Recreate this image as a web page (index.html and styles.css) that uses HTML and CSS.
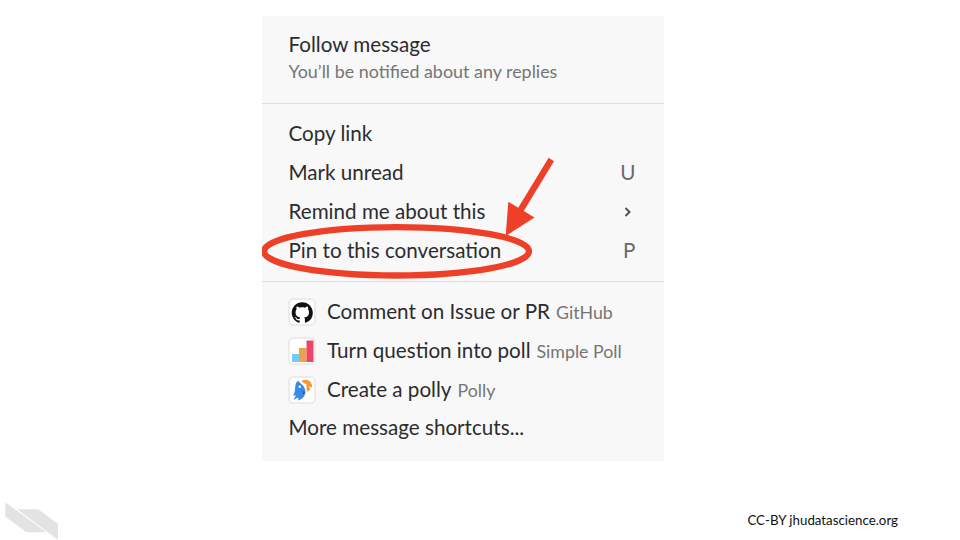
FILE: index.html
```
<!DOCTYPE html>
<html lang="en">
<head>
<meta charset="utf-8">
<title>Pin to this conversation</title>
<link rel="stylesheet" href="styles.css">
</head>
<body>
<main class="slide">
  <div class="menu">
    <section class="follow">
      <div class="label">Follow message</div>
      <div class="hint">You’ll be notified about any replies</div>
    </section>
    <section class="actions">
      <div class="row"><span class="label">Copy link</span></div>
      <div class="row"><span class="label">Mark unread</span><span class="key">U</span></div>
      <div class="row"><span class="label">Remind me about this</span>
        <svg class="chevron" viewBox="0 0 8 12"><path d="M1.5 2 5.5 6 1.5 10"/></svg>
      </div>
      <div class="row"><span class="label">Pin to this conversation</span><span class="key">P</span></div>
    </section>
    <section class="shortcuts">
      <div class="row app">
        <svg class="icon" viewBox="0 0 28 28"><rect class="tile" x="1" y="1" width="26" height="26" rx="4.5"/><path transform="translate(3.7 4.2) scale(1.32)" fill="#111" d="M8 0C3.58 0 0 3.58 0 8c0 3.54 2.29 6.53 5.47 7.59.4.07.55-.17.55-.38 0-.19-.01-.82-.01-1.49-2.01.37-2.53-.49-2.69-.94-.09-.23-.48-.94-.82-1.13-.28-.15-.68-.52-.01-.53.63-.01 1.08.58 1.23.82.72 1.21 1.87.87 2.33.66.07-.52.28-.87.51-1.07-1.78-.2-3.64-.89-3.64-3.95 0-.87.31-1.59.82-2.15-.08-.2-.36-1.02.08-2.12 0 0 .67-.21 2.2.82.64-.18 1.32-.27 2-.27s1.36.09 2 .27c1.53-1.04 2.2-.82 2.2-.82.44 1.1.16 1.92.08 2.12.51.56.82 1.27.82 2.15 0 3.07-1.87 3.75-3.65 3.95.29.25.54.73.54 1.48 0 1.07-.01 1.93-.01 2.2 0 .21.15.46.55.38A8.01 8.01 0 0 0 16 8c0-4.42-3.58-8-8-8z"/></svg>
        <span class="label">Comment on Issue or PR</span><span class="source">GitHub</span>
      </div>
      <div class="row app">
        <svg class="icon" viewBox="0 0 28 28"><rect class="tile" x="1" y="1" width="26" height="26" rx="4.5"/><path fill="#72cdf4" d="M4 17h7v8H4z"/><path fill="#eca04a" d="M11 11h7.5v14H11z"/><path fill="#e8476b" d="M18.5 3.5h7V25h-7z"/></svg>
        <span class="label">Turn question into poll</span><span class="source">Simple Poll</span>
      </div>
      <div class="row app">
        <svg class="icon" viewBox="0 0 28 28"><rect class="tile" x="1" y="1" width="26" height="26" rx="4.5"/><path fill="#378ae8" d="M10 4.800 12.300 7 15 9.500C17 12 17.700 14 17.200 17.500 16.500 21 13.500 23.500 10 24.500L10.500 21.500 5.300 23.800 8 19.500H5C7.500 16 6.800 13 7.300 10.500 7.600 8 8.300 6 10 4.800z"/><path fill="#f79a35" d="M13.500 5C17.500 2.300 24 4 24.300 11.500L20.700 10.500 22.300 13C21.500 14.500 20.500 15.200 18.700 15.700 18.800 13.500 18.600 12 18.300 10.500L18.500 8C17 7.800 15 7 13.500 5z"/><circle cx="11.800" cy="10.800" r="1.200" fill="#fff"/><path fill="#245fb8" d="m14.500 15 3 1-2.400 3z"/></svg>
        <span class="label">Create a polly</span><span class="source">Polly</span>
      </div>
      <div class="row more"><span class="label">More message shortcuts...</span></div>
    </section>
    <svg class="markup" viewBox="0 0 402 445"><ellipse cx="134.500" cy="235.300" rx="132.500" ry="24.200"/><path class="shaft" d="M289.300 143.500 258 195"/><path class="head" d="M243.700 220 246.300 185.700 272.500 201.500z"/></svg>
  </div>
  <footer class="footer">
    <svg class="logo" viewBox="0 0 54 38"><path d="M.3.300 41.500 30.200H21.700L.3 14.700z"/><path d="M12.200 7.300H33.300L53 22V37.700z"/></svg>
    <span class="credit">CC-BY jhudatascience.org</span>
  </footer>
</main>
</body>
</html>
```
FILE: styles.css
```
* { box-sizing: border-box; }
body { margin: 0; background: #fff; font-family: Lato, sans-serif; }
.slide { width: 960px; height: 540px; padding-top: 16px; display: flex; flex-direction: column; overflow: hidden; }
.menu { position: relative; width: 402px; height: 445px; margin-left: 262px; background: #f8f8f8; color: #2c2c2e; overflow: hidden; flex: none; }
.label { font-size: 20.640px; line-height: 28px; white-space: nowrap; }
.hint { font-size: 17.900px; line-height: 26px; color: #757575; white-space: nowrap; }
.follow { height: 88px; padding: 14px 27px 0 26.500px; border-bottom: 1.500px solid #dedede; }
.actions { height: 178px; padding: 9px 27px 0 26.500px; border-bottom: 1.500px solid #dedede; }
.shortcuts { padding: 10px 27px 0 26.500px; }
.row { display: flex; align-items: center; height: 39px; }
.key { margin-left: auto; font-size: 20.640px; line-height: 28px; color: #696969; padding-right: 1.500px; }
.chevron { width: 8px; height: 12px; margin: 2px 5px 0 auto; fill: none; stroke: #555; stroke-width: 2; }
.app { align-items: baseline; }
.icon { width: 28px; height: 28px; margin: 0 11px 0 -.500px; align-self: center; flex: none; }
.app .label { line-height: 39px; }
.more { height: 35px; }
.tile { fill: #fff; stroke: #e6e6e6; stroke-width: 1.500; }
.source { margin-left: 6px; font-size: 17.800px; color: #757575; white-space: nowrap; }
.markup { position: absolute; inset: 0; width: 402px; height: 445px; fill: none; stroke: #ee4029; stroke-width: 6.300; }
.markup .head { fill: #ee4029; stroke: none; }
.footer { display: flex; flex: 1; justify-content: space-between; padding: 41px 62px 0 5px; }
.logo { width: 54px; height: 38px; fill: #e3e3e3; }
.credit { font-size: 13.300px; line-height: 18px; margin-top: 9px; color: #111; }
```
